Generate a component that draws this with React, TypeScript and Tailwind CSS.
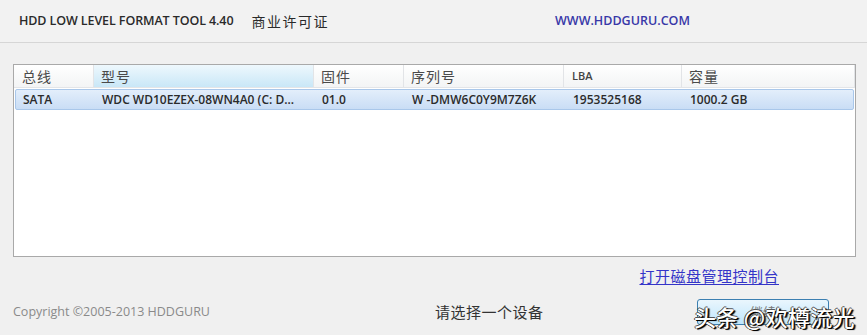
import React from "react";

const latin = { fontFamily: '"Open Sans", "Noto Sans CJK SC", sans-serif' };
const cjk = { fontFamily: '"Noto Sans CJK SC", "Open Sans", sans-serif' };

const cols = [
  { w: "w-[80px]", pl: "pl-[8px]" },
  { w: "w-[220px]", pl: "pl-[7px]" },
  { w: "w-[90px]", pl: "pl-[7px]" },
  { w: "w-[160px]", pl: "pl-[7px]" },
  { w: "w-[118px]", pl: "pl-[8px]" },
  { w: "flex-1", pl: "pl-[7px]" },
];

const headers = ["总线", "型号", "固件", "序列号", "LBA", "容量"];
const row = ["SATA", "WDC WD10EZEX-08WN4A0 (C: D...", "01.0", "W -DMW6C0Y9M7Z6K", "1953525168", "1000.2 GB"];

export default function App() {
  return (
    <div className="relative w-[867px] h-[335px] overflow-hidden bg-[#f0f0f0]" style={latin}>
      {/* title bar */}
      <div className="h-[43px] flex items-center border-b border-[#d6d6d6] pl-[19px] bg-[#f2f2f2]">
        <div className="w-[536px] flex items-center">
          <span className="text-[12.5px] font-semibold text-[#2a2a2a] tracking-[-0.1px]">HDD LOW LEVEL FORMAT TOOL 4.40</span>
          <span className="ml-[18px] text-[14px] text-[#2a2a2a] tracking-[1.5px]" style={cjk}>商业许可证</span>
        </div>
        <span className="text-[12.5px] font-semibold text-[#3838a8] tracking-[0px]">WWW.HDDGURU.COM</span>
      </div>

      {/* device list */}
      <div className="ml-[13px] mt-[21px] w-[843px] h-[193px] border border-[#a9a9a9] bg-white">
        <div className="flex h-[23px] bg-gradient-to-b from-white to-[#f3f4f5] border-b border-[#e3e5e8]">
          {headers.map((h, i) => (
            <div
              key={h}
              className={`${cols[i].w} ${cols[i].pl} flex items-center border-r border-[#e2e4e7] text-[14px] tracking-[1px] text-[#4a4a4a] ${
                i === 1 ? "bg-gradient-to-b from-[#eef8fd] to-[#c9e7f7] border-[#c0dcec]" : ""
              }`}
              style={h === "LBA" ? latin : cjk}
            >
              <span className={h === "LBA" ? "text-[11px] font-semibold text-[#444] tracking-[0px]" : ""}>{h}</span>
            </div>
          ))}
        </div>
        <div className="mx-[1px] mt-[1px] flex h-[21px] rounded-[2px] border border-[#a9c7ea] bg-gradient-to-b from-[#e3eefb] to-[#c9ddf5]">
          {row.map((c, i) => (
            <div
              key={i}
              className={`${i === 0 ? "w-[79px] pl-[7px]" : cols[i].w + " " + cols[i].pl} flex items-center text-[12px] font-semibold text-[#2b2b2b] tracking-[0px] whitespace-nowrap overflow-hidden`}
            >
              {c}
            </div>
          ))}
        </div>
      </div>

      {/* link */}
      <div className="mt-[9px] flex justify-end pr-[88px]">
        <span className="text-[15px] leading-[20px] text-[#3434c8] underline underline-offset-2 tracking-[0.5px]" style={cjk}>
          打开磁盘管理控制台
        </span>
      </div>

      {/* bottom row */}
      <div className="mt-[13px] flex items-center h-[26px]">
        <span className="ml-[13px] w-[422px] text-[12.5px] text-[#8a8a8a]">Copyright ©2005-2013 HDDGURU</span>
        <span className="w-[262px] text-[15px] text-[#333] tracking-[0.5px]" style={cjk}>请选择一个设备</span>
        <div className="w-[132px] h-[26px] rounded-[3px] border border-[#3c7fb1] bg-gradient-to-b from-[#eaf6fd] to-[#bee6fd] flex items-center justify-center text-[13px] text-[#777]" style={cjk}>
          继续
        </div>
      </div>

      {/* watermark */}
      <div
        className="absolute left-[694px] top-[301px] text-[22px] leading-[30px] font-medium text-white whitespace-nowrap tracking-[0.3px]"
        style={{ ...cjk, textShadow: "1px 1px 0 #000, 2px 1px 1px #222, -1px 0 0 #444, 0 -1px 0 #555" }}
      >
        头条 @欢樽流光
      </div>
    </div>
  );
}
